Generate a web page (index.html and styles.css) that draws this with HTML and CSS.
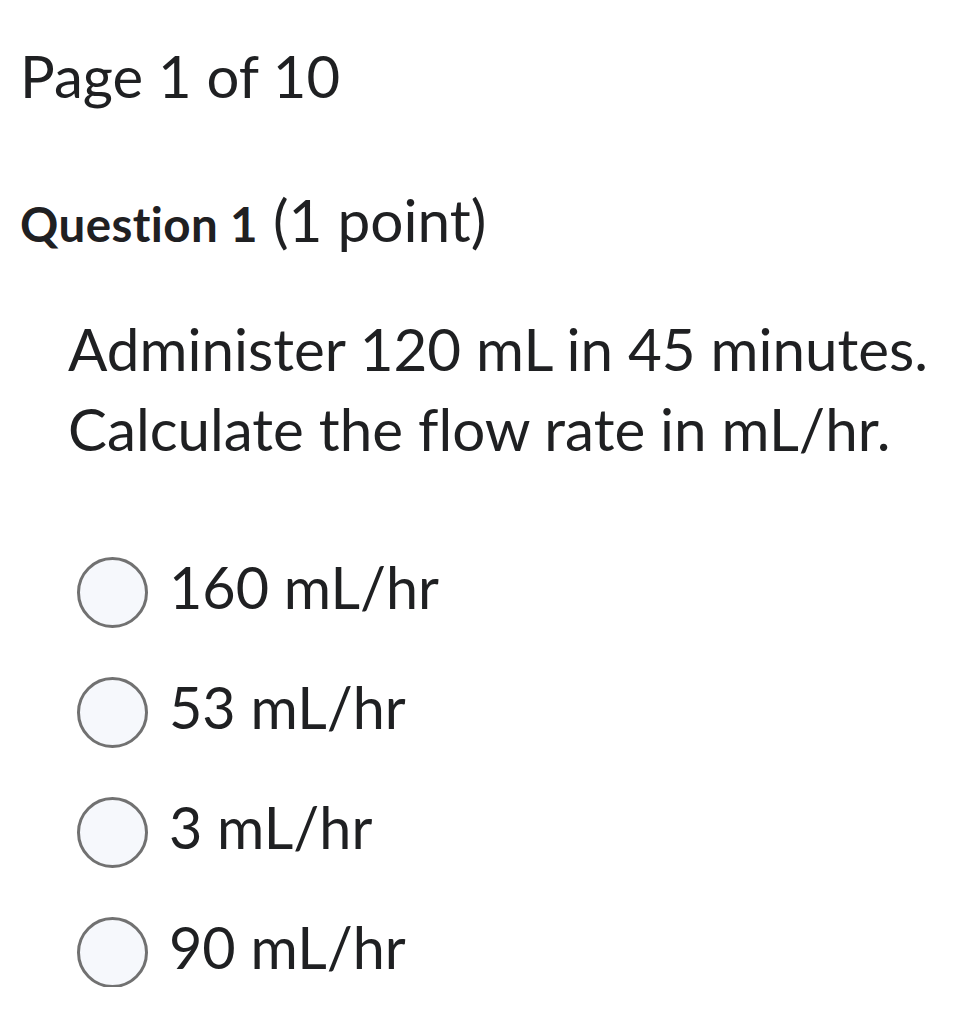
FILE: index.html
```html
<!DOCTYPE html>
<html lang="en">
<head>
<meta charset="utf-8">
<title>Quiz</title>
<link rel="stylesheet" href="styles.css">
</head>
<body>
<main class="page">
  <h1 class="page-title">Page 1 of 10</h1>
  <h2 class="question-title"><span class="q-num">Question 1</span> (1 point)</h2>
  <div class="question-text">
    <p>Administer 120 mL in 45 minutes.</p>
    <p>Calculate the flow rate in mL/hr.</p>
  </div>
  <ul class="options">
    <li class="option"><span class="radio"></span><span class="label">160 mL/hr</span></li>
    <li class="option"><span class="radio"></span><span class="label">53 mL/hr</span></li>
    <li class="option"><span class="radio"></span><span class="label">3 mL/hr</span></li>
    <li class="option"><span class="radio"></span><span class="label">90 mL/hr</span></li>
  </ul>
</main>
</body>
</html>
```

FILE: styles.css
```css
html, body {
  margin: 0;
  padding: 0;
  background: #ffffff;
}
body {
  font-family: Lato, "Open Sans", sans-serif;
  color: #1f2022;
  font-variant-ligatures: none;
  font-feature-settings: "liga" 0, "clig" 0, "dlig" 0, "calt" 0;
}
.page {
  padding: 36px 0 0 20px;
}
.page-title {
  margin: 0;
  font-weight: 400;
  font-size: 58px;
  line-height: 80px;
}
.question-title {
  margin: 68px 0 0 0;
  font-weight: 400;
  font-size: 58.5px;
  line-height: 70px;
}
.q-num {
  font-weight: 700;
  font-size: 47.5px;
  letter-spacing: 0.4px;
}
.question-text {
  margin: 49px 0 0 48px;
  font-size: 58.3px;
  line-height: 80px;
}
.question-text p {
  margin: 0;
}
.options {
  list-style: none;
  margin: 89px 0 0 57px;
  padding: 0;
  display: flex;
  flex-direction: column;
  gap: 50px;
}
.option {
  display: flex;
  align-items: flex-start;
  gap: 21px;
  height: 70px;
}
.radio {
  box-sizing: border-box;
  width: 71px;
  height: 71px;
  border-radius: 50%;
  border: 3px solid #717171;
  background: #f6f8fc;
  flex: none;
}
.label {
  font-size: 57.5px;
  line-height: 60px;
}
```
